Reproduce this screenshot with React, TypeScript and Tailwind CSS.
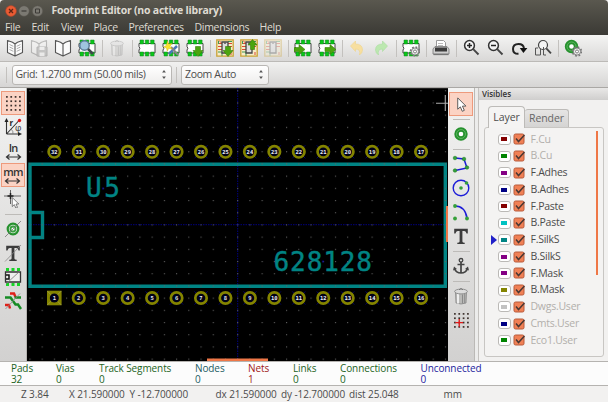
import React from 'react';

type Kids = { children?: React.ReactNode };

const Ico = ({ children, s = 18 }: Kids & { s?: number }) => (
  <svg width={s} height={s} viewBox="0 0 18 18" fill="none" className="shrink-0">{children}</svg>
);
const Slot = ({ children, on = false }: Kids & { on?: boolean }) => (
  <div className={'flex h-6 w-6 shrink-0 items-center justify-center ' + (on ? 'border border-[#ee9a7c] bg-[#fbd3c4]' : '')}>{children}</div>
);
const VSep = () => <div className="flex h-[17px] w-1.5 shrink-0 justify-center"><div className="h-full w-px bg-[#c3c1be]" /></div>;
const HSep = () => <div className="flex h-1.5 w-[17px] shrink-0 flex-col justify-center"><div className="h-px w-full bg-[#bdbbb8]" /></div>;

const Book = () => (
  <path d="M9 5 6.500 3.300 1.500 1.500v12L9 17l7.500-3.500v-12L11.500 3.300 9 5v12" fill="#fbfbfb" stroke="#555" strokeWidth="1.100" strokeLinejoin="round" />
);
const OpenBook = () => (
  <Ico><Book /><path d="M3.500 5.500 7.300 7.300M3.500 8l3.800 1.800M3.500 10.500l3.800 1.800M14.500 5.500l-3.800 1.800M14.500 8l-3.800 1.800M14.500 10.500l-3.800 1.800" stroke="#999" strokeWidth=".8" /></Ico>
);
const SaveBook = () => (
  <Ico><g opacity=".33"><Book /><path d="M7 8h10v9H7z" fill="#888" stroke="#555" /><path d="M9.500 8h5v3h-5zM9.500 13.500h5V17h-5z" fill="#fff" /></g></Ico>
);
const Chip = () => (
  <g>
    <path d="M1 4.500h16v9.500H1v-3q1.800-1.700 0-3.500z" fill="#fff" stroke="#444" strokeWidth="1" />
    <path d="M2 1h3.500v4H2zM7.300 1h3.500v4H7.300zM12.600 1h3.500v4h-3.500zM2 13h3.500v4H2zM7.300 13h3.500v4H7.300zM12.600 13h3.500v4h-3.500z" fill="#08c818" stroke="#158020" strokeWidth=".5" />
  </g>
);
const Gear = () => (
  <g>
    <circle cx="13" cy="12.500" r="4.300" stroke="#777" strokeWidth="2" strokeDasharray="1.690 1.690" />
    <circle cx="13" cy="12.500" r="3.600" fill="#eee" stroke="#777" strokeWidth=".9" />
    <circle cx="13" cy="12.500" r="1.500" fill="#fff" stroke="#666" strokeWidth=".8" />
  </g>
);
const DownArrow = () => <path d="M9.500 7.500h5v4h2.500l-5 6-5-6h2.500z" fill="#4ba50f" stroke="#378008" strokeWidth=".6" />;
const UpArrow = () => <path d="M10.500 10.500h4V6H17l-4.500-5.500L8 6h2.500z" fill="#4ba50f" stroke="#378008" strokeWidth=".6" />;
const Board = () => (
  <g>
    <path d="M.8.800h16.400v16.400H.8z" fill="#f6ecc8" stroke="#c9a235" strokeWidth="1.300" />
    <path d="M2 4.500h4M2 7.500h4M2 10.500h4M12 4.500h4M12 7.500h4M3 1.500l3 3M15 13v3" stroke="#dc4a32" strokeWidth="1" />
    <path d="M2 13h4v4M12 2.500h4M2.500 2v3" stroke="#419a55" strokeWidth="1" />
    <path d="M6 3h6v11H6z" fill="#ddd" stroke="#454545" strokeWidth="1.300" />
    <path d="M8 3.500h2v1.300H8z" fill="#555" />
  </g>
);
const Can = ({ fade = false }: { fade?: boolean }) => (
  <Ico>
    <g opacity={fade ? 0.35 : 1}>
      <path d="M3.500 5h11l-.5 11q-5 2-10 0z" fill="#b9b9b7" stroke="#858585" strokeWidth=".8" />
      <path d="M6 7v9.500" stroke="#eee" strokeWidth="2" />
      <path d="M10.500 7.500v9M12.700 7v9" stroke="#8a8a8a" strokeWidth="1" />
      <ellipse cx="9" cy="4.500" rx="6.400" ry="2.400" fill="#dcdcdc" stroke="#808080" strokeWidth=".8" />
      <path d="M7 2.800q2-2.600 4 0" stroke="#777" />
    </g>
  </Ico>
);
const Ring = () => (
  <g><circle cx="9" cy="9" r="4.500" fill="#fff" stroke="#26912e" strokeWidth="4.400" /><circle cx="9" cy="9" r="4.500" stroke="#66bd68" strokeWidth=".8" /></g>
);
const Lens = ({ sign }: { sign: string }) => (
  <Ico><circle cx="7.500" cy="6.500" r="4.900" fill="#f4f4f4" stroke="#333" strokeWidth="1.500" /><path d="m11.200 10.200 5.300 5.300" stroke="#444" strokeWidth="1.900" /><path d={sign} stroke="#222" strokeWidth="1.500" /></Ico>
);
const BigT = ({ strike = false }: { strike?: boolean }) => (
  <Ico><path d="M2.200 6.500V1.800h13.600v4.700h-1.300q-.3-2.600-2.200-2.600H10.400V14.600q0 1.200 2.300 1.200v1.200H5.300v-1.200q2.300 0 2.300-1.200V3.900H5.700Q3.800 3.900 3.500 6.500z" fill="#3c3c3c" />{strike && <path d="M1 17.500 17 1" stroke="#888" strokeWidth=".8" />}</Ico>
);
const Dots = () => (
  <g fill="#3b2f2b">{[2, 6.600, 11.200, 15.800].map(y => [2, 6.600, 11.200, 15.800].map(x => <rect key={x + '-' + y} x={x - 0.9} y={y - 0.9} width="1.800" height="1.800" />))}</g>
);
const Pointer = () => <path d="M5 2v12l2.800-2.500 2 4.700 2.200-1-2-4.500h3.700z" fill="#fff" stroke="#555" strokeWidth="1" />;
const Unit = ({ label }: { label: string }) => (
  <div className="flex flex-col items-center">
    <span className="h-[12px] text-[11px] leading-[11px] font-semibold tracking-[-0.8px] text-[#333]">{label}</span>
    <svg width="17" height="6" viewBox="0 0 17 6"><path d="M1.500 3h14M4.500.500 1.500 3l3 2.500M12.500.500l3 2.500-3 2.500" stroke="#333" strokeWidth="1.200" fill="none" /></svg>
  </div>
);
const Spin = () => (
  <svg width="6" height="11" viewBox="0 0 6 11" className="ml-auto shrink-0"><path d="M3 1 4.900 3.500H1.100zM3 10 1.100 7.500h3.800z" fill="#555" /></svg>
);

const menu = [
  ['File', 'w-[26.5px]'], ['Edit', 'w-[29.5px]'], ['View', 'w-[32.5px]'], ['Place', 'w-[35px]'],
  ['Preferences', 'w-[66px]'], ['Dimensions', 'w-[65px]'], ['Help', 'w-[30px]'],
];

const layers: [string, string, boolean][] = [
  ['F.Cu', '#840000', true], ['B.Cu', '#008400', true], ['F.Adhes', '#840084', false], ['B.Adhes', '#000084', false],
  ['F.Paste', '#840000', false], ['B.Paste', '#00c2c2', false], ['F.SilkS', '#008484', false], ['B.SilkS', '#840084', false],
  ['F.Mask', '#840084', false], ['B.Mask', '#848400', false], ['Dwgs.User', '#c2c2c2', true], ['Cmts.User', '#000084', true],
  ['Eco1.User', '#008400', true],
];

const stats = [
  ['Pads', '32', 'w-[45px] text-[#1d641d]'], ['Vias', '0', 'w-[43px] text-[#1d641d]'], ['Track Segments', '0', 'w-[96px] text-[#1d641d]'],
  ['Nodes', '0', 'w-[53px] text-[#1d5c64]'], ['Nets', '1', 'w-[45px] text-[#a01818]'], ['Links', '0', 'w-[47px] text-[#1d641d]'],
  ['Connections', '0', 'w-[80.5px] text-[#1d641d]'], ['Unconnected', '0', 'w-[80px] text-[#1c1c9c]'],
];

const status = [
  ['Z 3.84', 'w-[48px]'], ['X 21.590000', 'w-[60.5px]'], ['Y -12.700000', 'w-[86px]'], ['dx 21.590000', 'w-[65.5px]'],
  ['dy -12.700000', 'w-[68px]'], ['dist 25.048', 'w-[94.5px]'], ['mm', 'w-[30px]'],
];

function Canvas() {
  const pads = Array.from({ length: 16 }, (_, i) => i);
  return (
    <svg width="421" height="273" viewBox="27 88 421 273" className="block shrink-0 bg-black">
      <defs>
        <pattern id="grid" x="29.400" y="90.200" width="12.220" height="12.200" patternUnits="userSpaceOnUse">
          <rect x="0" y="0" width="1.100" height="1.100" fill="#606060" />
        </pattern>
      </defs>
      <path d="M27 88.500h421" stroke="#222" />
      <path d="M28 224.700h420M237.700 88v273" stroke="#0000a0" strokeWidth=".8" strokeDasharray="1.500 1" />
      {pads.map(i => {
        const x = 54.3 + i * 24.45;
        return (
          <g key={i}>
            {[151.8, 298].map((y, r) => (
              <g key={y}>
                <path d={`M${x - 6.500} ${y - 6.500}l13 13m0-13l-13 13`} stroke="#0000a8" strokeWidth=".7" />
                {r === 1 && i === 0
                  ? <g><path d={`M${x - 7.300} ${y - 7.300}h14.600v14.600h-14.600z`} fill="#848400" /><path d={`M${x - 7} ${y - 7}l14 14m0-14l-14 14`} stroke="#aaa860" strokeWidth=".6" /><circle cx={x} cy={y} r="4.500" fill="#000018" /></g>
                  : <circle cx={x} cy={y} r="5.700" fill="#000018" stroke="#848400" strokeWidth="2.700" />}
                <text x={x} y={y + 2.1} textAnchor="middle" fill="#eeeef8" className="font-['DejaVu_Sans_Mono',monospace] text-[5.5px] font-bold">{r === 0 ? 32 - i : i + 1}</text>
              </g>
            ))}
          </g>
        );
      })}
      <path d="M30 164.300h415.300v122H30zM30 212.500h12.500v25H30" fill="none" stroke="#008484" strokeWidth="3.400" />
      <g fill="#008484" stroke="#008484" strokeWidth=".45" className="font-['DejaVu_Sans_Mono','Liberation_Mono',monospace] text-[26px]">
        <text x="86" y="197" textLength="34">U5</text>
        <text x="273.500" y="270.500" textLength="98.500">628128</text>
      </g>
      <rect x="27" y="88" width="421" height="273" fill="url(#grid)" />
      <path d="M103 187.500v2M323 260.500v2" stroke="#0000c0" />
      <path d="M445.300 95v16M436 103.300h12" stroke="#aaa" strokeWidth="1.100" />
      <path d="M207 358.600h61v2.400h-61zM446 206h2v36h-2z" fill="#ef7747" />
    </svg>
  );
}

export default function App() {
  return (
    <div className="flex h-[402px] w-[608px] flex-col overflow-hidden bg-[#f2f1f0] font-['Open_Sans','Noto_Sans',sans-serif] text-[10.5px] font-medium text-[#4c4c4c]">
      <header className="h-[35px] shrink-0 rounded-t-[4px] bg-linear-to-b from-[#5a584f] to-[#3b3a35] text-[#dfdbd2]">
        <div className="flex h-[21px] items-center pl-[5px]">
          <svg width="41" height="14" viewBox="0 0 41 14" fill="none" className="shrink-0">
            <circle cx="6" cy="7" r="5.400" fill="#ea5b33" stroke="#a8452c" strokeWidth=".6" /><path d="m4 5 4 4m0-4L4 9" stroke="#5c2516" strokeWidth="1.300" />
            <circle cx="19" cy="7" r="5.300" fill="#7b7972" stroke="#55534c" strokeWidth=".6" /><path d="M16.500 7h5" stroke="#3d3b37" strokeWidth="1.200" />
            <circle cx="32.500" cy="7" r="5.300" fill="#7b7972" stroke="#55534c" strokeWidth=".6" /><path d="M30.500 5h4v4h-4z" stroke="#3d3b37" />
          </svg>
          <span className="ml-[5.5px] text-[10.5px] font-bold tracking-[-0.23px] whitespace-nowrap">Footprint Editor (no active library)</span>
        </div>
        <nav className="flex h-[14px] items-center pl-[5px] tracking-[-0.3px]">
          {menu.map(([t, w]) => <span key={t} className={'shrink-0 whitespace-nowrap ' + w}>{t}</span>)}
        </nav>
      </header>

      <div className="flex h-[27px] shrink-0 items-center border-b border-[#bcbab7] bg-linear-to-b from-[#f4f4f3] to-[#d9d8d7] pl-[3px]">
        <Slot><OpenBook /></Slot>
        <Slot><SaveBook /></Slot>
        <Slot><Ico><Book /></Ico></Slot>
        <Slot><Ico><Chip /><circle cx="6.500" cy="6.500" r="4.700" fill="#9fc4df" stroke="#5c7c98" strokeWidth="1.500" /><path d="m10 10 5 5" stroke="#41474d" strokeWidth="2.500" /></Ico></Slot>
        <VSep />
        <Slot><Can fade /></Slot>
        <VSep />
        <Slot><Ico><Chip /></Ico></Slot>
        <Slot><Ico><Chip /><path d="m7 15 8-8" stroke="#4b78b5" strokeWidth="2.500" /><path d="m9 8 7 8" stroke="#888" strokeWidth="2" /><path d="m5.500 2 1.200 3 3.300-.5-2 2.700L10 10l-3.300-.5-1.500 2.700L4.500 9 1.500 8l2.800-1.500z" fill="#f9e32c" stroke="#c9a910" strokeWidth=".4" /></Ico></Slot>
        <Slot><Ico><Chip /><DownArrow /></Ico></Slot>
        <VSep />
        <Slot><Ico><Board /><DownArrow /></Ico></Slot>
        <Slot><Ico><Board /><UpArrow /></Ico></Slot>
        <Slot><Ico><g opacity=".35"><Board /></g></Ico></Slot>
        <VSep />
        <Slot><Ico><Chip /><path d="M0 8.500h5V5.500l6 5-6 5v-3H0z" fill="#4ba50f" stroke="#378008" strokeWidth=".6" /></Ico></Slot>
        <Slot><Ico><Chip /><path d="M7 8.500h5V5.500l6 5-6 5v-3H7z" fill="#4ba50f" stroke="#378008" strokeWidth=".6" /></Ico></Slot>
        <VSep />
        <Slot><Ico><path d="m2.500 7 5-5v3q7 0 7 6 0 3-3 5 1.500-6-4-6v2.500z" fill="#f7dfa0" stroke="#efd38a" strokeWidth=".6" /></Ico></Slot>
        <Slot><Ico><path d="m15.500 7-5-5v3q-7 0-7 6 0 3 3 5-1.500-6 4-6v2.500z" fill="#bce8b0" stroke="#a9dca0" strokeWidth=".6" /></Ico></Slot>
        <VSep />
        <Slot><Ico><Chip /><Gear /></Ico></Slot>
        <VSep />
        <Slot><Ico><path d="M4.500 1.500h7l2 2V9h-9z" fill="#fff" stroke="#999" /><path d="M6 4.500h5M6 6.500h5" stroke="#bbb" /><path d="M3 7.500h12l2 2.500v5H1v-5z" fill="#cfcfcf" stroke="#777" strokeWidth=".8" /><path d="M3 8.500h12v4H3z" fill="#3b3b3b" /><path d="M1.500 15.500h15" stroke="#777" strokeWidth="1.300" /></Ico></Slot>
        <VSep />
        <Slot><Lens sign="M5 6.500h5M7.500 4v5" /></Slot>
        <Slot><Lens sign="M5 6.500h5" /></Slot>
        <Slot><Ico><path d="M8.500 14.800Q3 15 3 10q0-5 5.500-5 5 0 5.500 4.500" stroke="#222" strokeWidth="2" /><path d="M9.800 9h7.600l-4 5z" fill="#111" /></Ico></Slot>
        <Slot><Ico><circle cx="9" cy="6" r="4.500" fill="#f4f4f4" stroke="#444" strokeWidth="1.200" /><path d="m12.300 9.300 4.700 5" stroke="#444" strokeWidth="1.800" /><path d="M4 16H1.500V9H4M6.500 9.500V16H4M9.500 8v8h2.500" stroke="#555" strokeWidth="1" /></Ico></Slot>
        <VSep />
        <Slot><Ico><g transform="translate(-1.500 -1.500)"><Ring /></g><Gear /></Ico></Slot>
      </div>

      <div className="flex h-[26px] shrink-0 items-center border-b border-[#aaa8a5] bg-linear-to-b from-[#f1f1f0] to-[#d6d5d4] pl-[6px] text-[10.5px] tracking-[-0.35px]">
        <div className="h-4 w-px bg-[#c3c1be]" />
        <div className="ml-[4.5px] flex h-5 w-[160px] shrink-0 items-center rounded-[3px] border border-[#b9b7b4] bg-linear-to-b from-white to-[#eeedec] pr-[4px] pl-[3px] whitespace-nowrap">Grid: 1.2700 mm (50.00 mils)<Spin /></div>
        <div className="ml-[4px] h-4 w-px bg-[#c3c1be]" />
        <div className="ml-[4.5px] flex h-5 w-[88px] shrink-0 items-center rounded-[3px] border border-[#b9b7b4] bg-linear-to-b from-white to-[#eeedec] pr-[4px] pl-[3px] whitespace-nowrap">Zoom Auto<Spin /></div>
      </div>

      <main className="flex h-[273px] shrink-0">
        <aside className="flex w-[27px] shrink-0 flex-col items-center border-r border-[#b5b3b0] bg-linear-to-b from-[#f3f3f2] to-[#d2d1d0] pt-[3px]">
          <Slot on><Ico s={17}><Dots /></Ico></Slot>
          <Slot><Ico><path d="M2.500 16V2M2.500 16H16M2.500 16 15 2.500" stroke="#333" strokeWidth="1.100" /><path d="M2.500 0 4.500 4h-4zM18 16l-4-2v4z" fill="#222" /><path d="M7 11q2.500 2 2 5" stroke="#777" strokeWidth=".8" /><circle cx="15.500" cy="2.500" r="1.700" fill="#e01818" /><text x="5.500" y="7.500" className="text-[8px] font-bold" fill="#222">r</text><text x="11" y="12.500" className="text-[9px]" fill="#333">φ</text></Ico></Slot>
          <Slot><Unit label="In" /></Slot>
          <Slot on><Unit label="mm" /></Slot>
          <Slot><Ico><path d="M6.500 0v14M0 6h17" stroke="#555" strokeWidth=".9" /><path d="M6.500 3v6M3.500 6h6" stroke="#222" strokeWidth="1.500" /><g transform="translate(4.500 6) scale(.75)"><Pointer /></g></Ico></Slot>
          <HSep />
          <Slot><Ico><circle cx="9" cy="9" r="5.300" stroke="#26912e" strokeWidth="2.200" fill="#d8ecd8" /><circle cx="9" cy="9" r="2.500" stroke="#3b9f42" strokeWidth="1.800" fill="#fff" /><path d="M1 17 17 1" stroke="#777" strokeWidth=".8" /></Ico></Slot>
          <Slot><BigT strike /></Slot>
          <Slot><Ico><path d="M2 0h3v3H2zM7.500 0h3v3h-3zM13 0h3v3h-3zM2 15h3v3H2zM7.500 15h3v3h-3zM13 15h3v3h-3z" fill="#17d427" /><path d="M1.500 4h15v10h-15z" fill="#eee" stroke="#333" strokeWidth="1.300" /><path d="M2 7h3v4H2" stroke="#111" strokeWidth="1.500" /><path d="M2 16 16 3" stroke="#777" strokeWidth=".8" /></Ico></Slot>
          <Slot><Ico><path d="M6 1.500h4l1.500 3.500M1 13h4l1 3.500" stroke="#df2018" strokeWidth="2.400" /><path d="M10.500 5.500H17M1 5.500h5.500l5 7h2.500l3 4.500" stroke="#168c24" strokeWidth="2.500" /><path d="M1.500 17 16 1.500" stroke="#888" strokeWidth=".8" /></Ico></Slot>
        </aside>

        <Canvas />

        <aside className="flex w-[27px] shrink-0 flex-col items-center border-r border-[#bbb9b6] bg-linear-to-b from-[#f3f3f2] to-[#d2d1d0] pt-[4px]">
          <Slot on><Ico s={17}><Pointer /></Ico></Slot>
          <HSep />
          <Slot><Ico><Ring /></Ico></Slot>
          <HSep />
          <Slot><Ico><path d="M3 3l9 1 3 9-12 2.500" stroke="#1c1cd8" strokeWidth="1.500" /><g fill="#35a03a" stroke="#187820" strokeWidth=".5"><circle cx="3" cy="3" r="1.800" /><circle cx="12" cy="4" r="1.800" /><circle cx="15" cy="12.500" r="1.800" /><circle cx="3" cy="15.500" r="1.800" /></g></Ico></Slot>
          <Slot><Ico><circle cx="9" cy="9" r="7.800" stroke="#1c1cd8" strokeWidth="1.400" /><circle cx="9" cy="9" r="1.800" fill="#35a03a" /><circle cx="14.500" cy="4" r="1.800" fill="#35a03a" /></Ico></Slot>
          <Slot><Ico><path d="M3 3q10 0 12 12" stroke="#1c1cd8" strokeWidth="1.600" /><g fill="#35a03a"><circle cx="3" cy="3" r="1.900" /><circle cx="15" cy="15.500" r="1.900" /><circle cx="3" cy="15.500" r="1.900" /></g></Ico></Slot>
          <Slot><BigT /></Slot>
          <HSep />
          <Slot><Ico><circle cx="9" cy="3.300" r="1.800" stroke="#444" strokeWidth="1.300" /><path d="M9 5v11M5.500 7.500h7M2.500 11.500Q4 16 9 16q5 0 6.500-4.500" stroke="#444" strokeWidth="1.700" /><path d="m1 13.500 1-4 3 2.500zM17 13.500l-1-4-3 2.500z" fill="#444" /></Ico></Slot>
          <HSep />
          <Slot><Can /></Slot>
          <Slot><Ico s={17}><Dots /><path d="M6.600 7.500v8M2.600 11.300h8" stroke="#e01818" strokeWidth="1.400" /></Ico></Slot>
        </aside>

        <div className="flex w-1 shrink-0 items-center border-r border-[#c4c2bf] bg-[#ececeb]" />

        <section className="flex flex-1 flex-col bg-[#f2f1f0]">
          <div className="h-[12px] shrink-0 bg-linear-to-b from-[#e9e8e7] to-[#cfcecd] pl-[3px] text-[8px] leading-[12px] font-semibold text-[#333]">Visibles</div>
          <div className="mt-[6px] flex h-[21px] shrink-0 items-end pl-[9px] text-[10.5px] tracking-[-0.1px]">
            <div className="z-10 -mb-px flex h-[22px] w-[37px] shrink-0 items-center justify-center rounded-t-[4px] border border-b-0 border-[#bdbbb8] bg-[#f5f4f3]">Layer</div>
            <div className="flex h-[18px] w-[44px] shrink-0 items-center justify-center rounded-t-[3px] border border-b-0 border-l-0 border-[#bdbbb8] bg-linear-to-b from-[#e6e5e4] to-[#d5d4d3] text-[#666]">Render</div>
          </div>
          <div className="mr-[4px] ml-[5px] flex h-[230px] shrink-0 rounded-[3px] border border-[#c8c6c3] bg-[#f4f3f2] pt-[3px]">
            <div className="flex w-[111px] shrink-0 flex-col">
              {layers.map(([name, color, dim]) => (
                <div key={name} className="flex h-[16.75px] shrink-0 items-center">
                  <div className="flex w-[12.5px] shrink-0 justify-end pr-px">
                    {name === 'F.SilkS' && <svg width="6" height="10" viewBox="0 0 6 10"><path d="m0 0 6 5-6 5z" fill="#2020c8" /></svg>}
                  </div>
                  <div className="flex h-[11px] w-[13px] shrink-0 items-center justify-center rounded-[3px] border border-[#bbb9b6] bg-white"><i className="block h-[4px] w-[6px]" style={{ background: color }} /></div>
                  <svg width="12" height="12" viewBox="0 0 12 12" className="ml-[2.5px] shrink-0" fill="none"><rect x="1" y="1" width="10" height="10" rx="1.500" fill="#f08055" stroke="#b75a3b" /><path d="m3 5.500 2.500 3L11.500 2" stroke="#493733" strokeWidth="1.500" /></svg>
                  <span className={'ml-[5.5px] text-[10.5px] tracking-[-0.25px] whitespace-nowrap ' + (dim ? 'text-[#b2afab]' : 'text-[#4c4c4c]')}>{name}</span>
                </div>
              ))}
            </div>
            <div className="h-[144px] w-[2px] bg-[#ef7747]" />
          </div>
        </section>
      </main>

      <div className="flex h-[25px] shrink-0 border-y border-[#b5b3b0] bg-[#fcfcfc] pl-[11px]">
        {stats.map(([t, v, c]) => (
          <div key={t} className={'flex shrink-0 flex-col text-[10px] leading-[11px] tracking-[-0.1px] whitespace-nowrap ' + c}><span className="mt-[0.5px] h-[11px]">{t}</span><span className="mt-[0.5px] h-[11px]">{v}</span></div>
        ))}
      </div>

      <footer className="flex h-4 shrink-0 items-center bg-[#f2f1f0] pl-[21px] text-[10px] tracking-[-0.1px]">
        {status.map(([t, w]) => <span key={t} className={'shrink-0 whitespace-nowrap ' + w}>{t}</span>)}
      </footer>
    </div>
  );
}
